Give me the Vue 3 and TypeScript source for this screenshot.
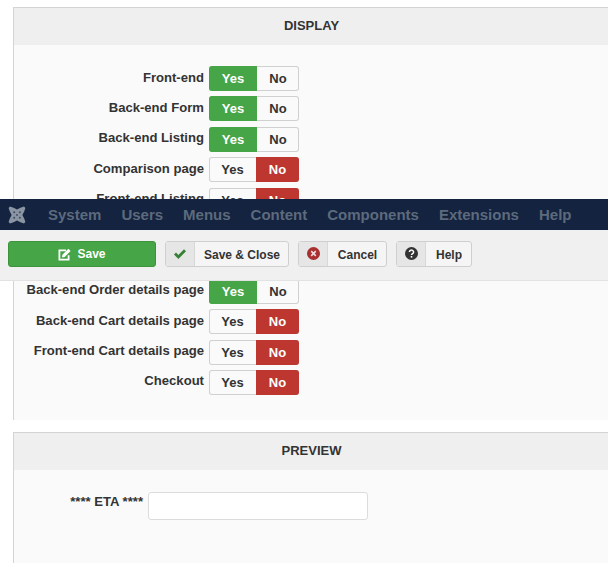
<script setup lang="ts">
interface Row { label: string; yes: boolean }
const rows: Row[] = [
  { label: 'Front-end', yes: true },
  { label: 'Back-end Form', yes: true },
  { label: 'Back-end Listing', yes: true },
  { label: 'Comparison page', yes: false },
  { label: 'Front-end Listing', yes: false },
  { label: 'Front-end Order page', yes: false },
  { label: 'Front-end Order details', yes: false },
  { label: 'Back-end Order details page', yes: true },
  { label: 'Back-end Cart details page', yes: false },
  { label: 'Front-end Cart details page', yes: false },
  { label: 'Checkout', yes: false },
]
const menu = ['System', 'Users', 'Menus', 'Content', 'Components', 'Extensions', 'Help']
</script>

<template>
  <div class="page">
    <section class="panel first">
      <h3 class="head">DISPLAY</h3>
      <div class="body rows">
        <div v-for="r in rows" :key="r.label" class="row">
          <label class="lab">{{ r.label }}</label>
          <div class="toggle">
            <span class="opt yes" :class="{ on: r.yes }">Yes</span>
            <span class="opt no" :class="{ on: !r.yes }">No</span>
          </div>
        </div>
      </div>
    </section>

    <section class="panel second">
      <h3 class="head">PREVIEW</h3>
      <div class="body preview">
        <div class="row">
          <label class="lab short">**** ETA ****</label>
          <input class="field" type="text" />
        </div>
      </div>
    </section>

    <div class="overlay">
      <nav class="nav">
        <svg class="logo" width="18" height="18" viewBox="0 0 18 18" aria-hidden="true">
          <g fill="#8a94a2">
            <path d="M2 0.6 5.6 1.8 9 3.6 12.4 1.8 16 0.6 17.4 2 16.2 5.6 14.4 9 16.2 12.4 17.4 16 16 17.4 12.4 16.2 9 14.4 5.6 16.2 2 17.4 0.6 16 1.8 12.4 3.6 9 1.8 5.6 0.6 2Z" />
          </g>
          <g fill="#3f4d63">
            <circle cx="6.2" cy="6.2" r="1" />
            <circle cx="11.8" cy="6.2" r="1" />
            <circle cx="6.2" cy="11.8" r="1" />
            <circle cx="11.8" cy="11.8" r="1" />
            <circle cx="9" cy="9" r="0.9" />
          </g>
        </svg>
        <a v-for="m in menu" :key="m" class="item">{{ m }}</a>
      </nav>
      <div class="bar">
        <button class="btn save" type="button">
          <svg width="13" height="13" viewBox="0 0 13 13" aria-hidden="true">
            <path d="M0.5 1.5h7.5v1.8H2.3v7.4h7.4V7.2h1.8v5.3H0.5Z" fill="#fff" />
            <path d="M4.4 6.8 10.4 0.8 12.6 3 6.6 9 4 9.4Z" fill="#fff" />
          </svg>
          <span>Save</span>
        </button>
        <button class="btn std sc" type="button">
          <span class="ico"><svg width="14" height="12" viewBox="0 0 14 12" aria-hidden="true"><path d="M1 6.5 3 4.5 5.4 7 11 1.2 13 3.2 5.4 11Z" fill="#378137" /></svg></span>
          <span class="txt">Save &amp; Close</span>
        </button>
        <button class="btn std cc" type="button">
          <span class="ico"><svg width="13" height="13" viewBox="0 0 13 13" aria-hidden="true"><circle cx="6.5" cy="6.5" r="6.5" fill="#a93030" /><path d="M4.2 4.2 8.8 8.8M8.8 4.2 4.2 8.8" stroke="#eedada" stroke-width="1.7" /></svg></span>
          <span class="txt">Cancel</span>
        </button>
        <button class="btn std hp" type="button">
          <span class="ico"><svg width="13" height="13" viewBox="0 0 13 13" aria-hidden="true"><circle cx="6.5" cy="6.5" r="6.5" fill="#333" /><path d="M4.4 5a2.1 1.9 0 1 1 3.2 1.6c-.8.5-1.1.8-1.1 1.4" fill="none" stroke="#fff" stroke-width="1.5" /><rect x="5.7" y="9" width="1.6" height="1.6" fill="#fff" /></svg></span>
          <span class="txt">Help</span>
        </button>
      </div>
    </div>
  </div>
</template>

<style>
html, body { margin: 0; background: #fff; overflow: hidden; }
</style>

<style scoped>
.page {
  position: relative;
  width: 608px;
  height: 563px;
  overflow: hidden;
  box-sizing: border-box;
  padding: 7px 0 0 13px;
  font-family: "Liberation Sans", Arial, sans-serif;
  font-size: 13px;
  color: #333;
}
.panel {
  width: 640px;
  background: #fafafa;
  border-left: 1px solid #d4d4d4;
  border-top: 1px solid #d4d4d4;
  box-sizing: border-box;
}
.first { height: 413px; }
.second { margin-top: 12px; height: 140px; }
.head {
  margin: 0;
  width: 595px;
  height: 37px;
  background: #efefef;
  font-size: 13px;
  line-height: 36px;
  font-weight: 700;
  text-align: center;
  color: #333;
}
.rows { display: flex; flex-direction: column; padding-top: 21px; gap: 5.4px; }
.preview { padding-top: 22px; }
.row { display: flex; align-items: flex-start; gap: 5px; height: 25px; }
.lab {
  width: 190px;
  text-align: right;
  font-size: 13.1px;
  font-weight: 700;
  line-height: 18px;
  white-space: nowrap;
  flex: none;
  padding-top: 2.5px;
}
.lab.short { width: 129px; margin-right: 1px; padding-top: 1px; }
.toggle {
  display: flex;
  width: 90px;
  height: 25px;
  box-sizing: border-box;
  border-radius: 3px;
  overflow: hidden;
  box-shadow: inset 0 0 0 1px #d0d0d0;
  font-weight: 700;
  line-height: 26px;
  text-align: center;
}
.opt { flex: none; }
.yes { width: 48px; }
.no { width: 42px; }
.yes.on { background: #46a546; color: #fff; }
.no.on { background: #bd362f; color: #fff; width: 43px; }
.yes:not(.on) { width: 47px; }
.field {
  width: 220px;
  height: 28px;
  margin-left: -1px;
  box-sizing: border-box;
  background: #fff;
  border: 1px solid #dcdcdc;
  border-radius: 3px;
  outline: none;
}
.overlay {
  position: absolute;
  left: 0;
  top: 199px;
  width: 608px;
}
.nav {
  display: flex;
  align-items: center;
  height: 31px;
  background: #132340;
  padding-left: 8px;
  gap: 20px;
  box-sizing: border-box;
}
.logo { margin-right: 2px; }
.item { color: #5d6a7c; font-size: 15px; font-weight: 700; line-height: 31px; }
.bar {
  display: flex;
  align-items: flex-start;
  gap: 9px;
  height: 51px;
  box-sizing: border-box;
  padding: 11px 0 0 8px;
  background: #f0f0f0;
  border-bottom: 1px solid #e2e2e2;
}
.btn {
  display: flex;
  align-items: stretch;
  height: 26px;
  padding: 0;
  box-sizing: border-box;
  font: 700 12px/26px "Liberation Sans", Arial, sans-serif;
  border-radius: 3px;
  color: #333;
}
.save {
  width: 148px;
  align-items: center;
  justify-content: center;
  gap: 6px;
  background: #46a546;
  border: 1px solid #3c933c;
  color: #fff;
}
.std {
  background: #f5f5f5;
  border: 1px solid #cfcfcf;
}
.ico {
  display: flex;
  align-items: center;
  justify-content: center;
  background: #e6e6e6;
  border-right: 1px solid #d8d8d8;
  width: 28px;
  flex: none;
}
.ico svg { margin-top: -1px; }
.txt { flex: 1; text-align: center; padding-left: 1px; }
.sc { width: 124px; }
.cc { width: 89px; }
.hp { width: 76px; }
</style>
